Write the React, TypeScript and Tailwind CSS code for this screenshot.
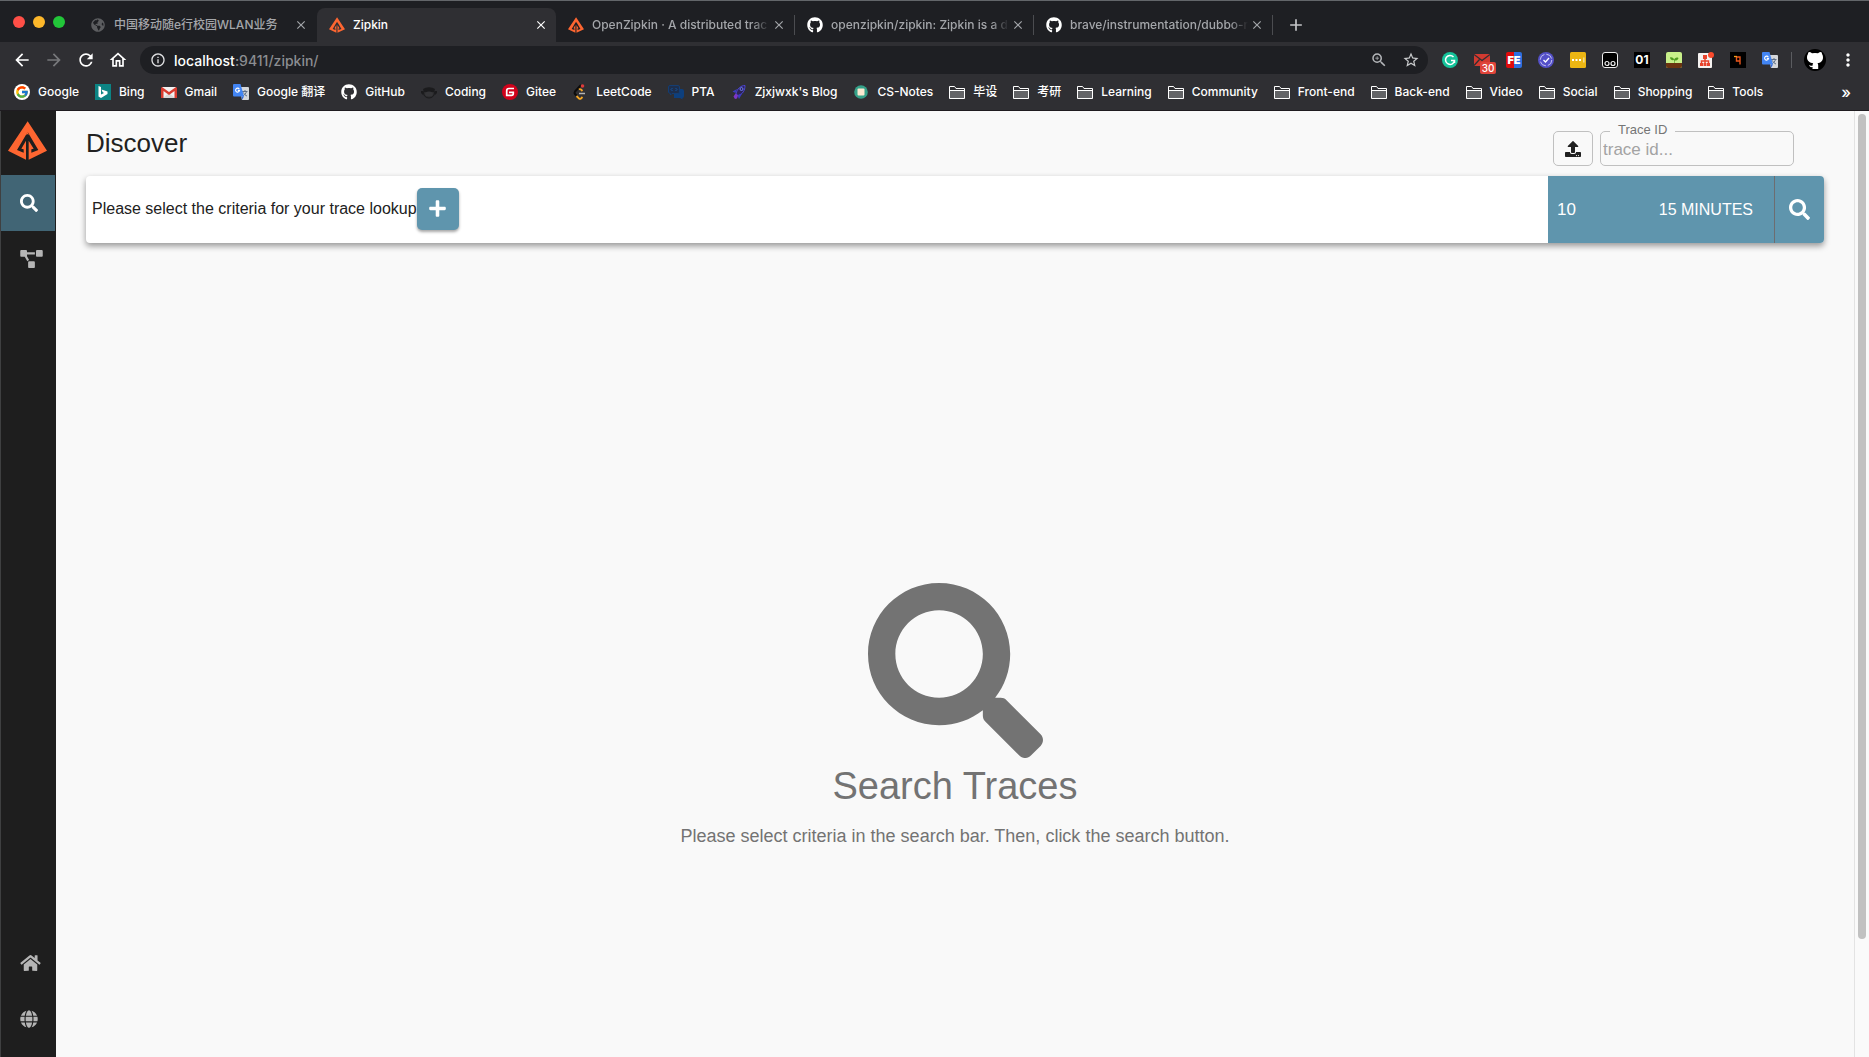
import React from 'react';
import { FaSearch, FaProjectDiagram, FaHome, FaGlobe, FaUpload, FaPlus, FaGithub, FaGlobeAmericas } from 'react-icons/fa';
import { MdArrowBack, MdArrowForward, MdRefresh, MdOutlineHome, MdInfoOutline, MdZoomIn, MdStarBorder, MdMoreVert, MdClose, MdAdd } from 'react-icons/md';
import { FcGoogle } from 'react-icons/fc';

function ZipkinLogo({ className }: { className: string }) {
  return (
    <svg className={className} viewBox="0 0 117 115" aria-hidden="true">
      <path
        fill="#fe6631"
        fillRule="evenodd"
        d="M59 0 L117 88 L62 115 V42 L58 38 L54 42 V115 L0 88 Z M59 32 L27 86 L47 94 V84 L40 82 L54 58 V42 Z M59 32 L91 86 L70 94 V84 L77 82 L62 58 V42 Z"
      />
    </svg>
  );
}

function TranslateIcon() {
  return (
    <svg className="size-4" viewBox="0 0 16 16" aria-hidden="true">
      <path fill="#d5d7da" d="M6 3h9a1 1 0 0 1 1 1v11a1 1 0 0 1-1 1H9z" />
      <path stroke="#5f6f86" fill="none" d="M9 7.500h5.500M12 6v1.500M13.500 7.500c-.5 2-2 3.500-3.500 4.500M10.500 8.500c.5 1.500 2 3 3.500 3.500" />
      <path fill="#4285f4" d="M1 0h6.500L11 12.500H1a1 1 0 0 1-1-1V1a1 1 0 0 1 1-1z" />
      <path fill="#3367d6" d="M8.500 12.500H11L9 16z" />
      <path stroke="#fff" fill="none" strokeWidth="1.100" d="M6.300 5a2 2 0 1 0 .3 1.400H4.800" />
    </svg>
  );
}

function FolderIcon() {
  return (
    <svg className="size-4" viewBox="0 0 16 16" aria-hidden="true">
      <path fill="#636467" stroke="#fff" d="M.5 14.500V2.500h5l1.500 2h8.500v10z" />
      <path fill="none" stroke="#fff" d="M.5 6.500h15" />
      <path fill="#2f2f33" d="M1 3h4.200l1.500 2H15v1H1z" />
    </svg>
  );
}

function BingIcon() {
  return (
    <svg className="size-4" viewBox="0 0 16 16" aria-hidden="true">
      <path fill="#0c8484" d="M0 0h16v16H0z" />
      <path fill="#fff" d="M3.500 2 6 3v7.500l3-1.500-1.500-1-1-2.500 6 2v2.500L6 14l-2.500-1.500z" />
    </svg>
  );
}

function GmailIcon() {
  return (
    <svg className="size-4" viewBox="0 0 16 16" aria-hidden="true">
      <path fill="#f2f2f2" d="M1 3h14v11H1z" />
      <path fill="#d8d8d8" d="M8 9l6 5H2z" />
      <path fill="#d93c30" d="M1 3l7 5 7-5 1 1v10h-2.500V7L8 11 2.500 7v7H0V4z" />
    </svg>
  );
}

function CodingIcon() {
  return (
    <svg className="size-4" viewBox="0 0 16 16" aria-hidden="true">
      <ellipse cx="8" cy="9" rx="5.500" ry="5" fill="#2b2b2d" stroke="#1b1b1d" />
      <path fill="#1b1b1d" d="M2 5a7 3 0 0 1 12 0l-1 3H3zM0 7h2v4L0 9zM16 7h-2v4l2-2z" />
      <ellipse cx="8" cy="10" rx="4" ry="2.500" fill="#343437" />
    </svg>
  );
}

function GiteeIcon() {
  return (
    <svg className="size-4" viewBox="0 0 16 16" aria-hidden="true">
      <circle cx="8" cy="8" r="8" fill="#d0021b" />
      <path fill="none" stroke="#fff" strokeWidth="1.700" d="M12 4.500H7A2.300 2.300 0 0 0 4.700 6.800v4.500H9.500a1.800 1.800 0 0 0 1.800-1.800V8.300H7" />
    </svg>
  );
}

function LeetCodeIcon() {
  return (
    <svg className="size-4" viewBox="0 0 16 16" aria-hidden="true">
      <path fill="none" stroke="#0c0c0c" strokeWidth="2" d="M9 1 3 7.500a2 2 0 0 0 0 2.500l2 2" />
      <path fill="none" stroke="#f5a623" strokeWidth="1.800" d="m4.500 12 2.500 2.500q1 .8 2 0l1.500-1.500M7 5.500q1-.8 2 0l1.500 1.500" />
      <path stroke="#b3b3b3" strokeWidth="1.500" d="M7 9.500h6" />
      <circle cx="10.500" cy="2" r="1.800" fill="#dd3b3b" />
    </svg>
  );
}

function PtaIcon() {
  return (
    <svg className="size-4" viewBox="0 0 16 16" aria-hidden="true">
      <path fill="#0d3f7d" d="M6 5h8a2 2 0 0 1 2 2v5a2 2 0 0 1-1.500 2v1.500L12 14H6z" />
      <path fill="#1d2e4c" stroke="#143d72" d="M2 1.500h8a1.500 1.500 0 0 1 1.500 1.500v5A1.500 1.500 0 0 1 10 9.500H4L2.500 11V9.500A2 2 0 0 1 .5 8V3A1.500 1.500 0 0 1 2 1.500z" />
      <path fill="none" stroke="#14549e" d="M4.500 4 3 5.500 4.500 7M7.500 4 9 5.500 7.500 7" />
    </svg>
  );
}

function RocketIcon() {
  return (
    <svg className="size-4" viewBox="0 0 16 16" aria-hidden="true">
      <path fill="#2d2456" stroke="#4c45d6" d="M14 1.500C10 1.500 6 4.500 5 10l2 1.500c5-1.500 7-5 7-10z" />
      <path fill="#3b3bbf" d="M6 5 1.500 7.500 4.500 9zM11.500 9 8 15l-1.500-3.500z" />
      <path fill="#7d35c9" d="m4.500 9.500 2.500 2-1 3-2 .5-1.500-2.500z" />
      <circle cx="10.500" cy="5" r="1.500" fill="none" stroke="#6d7ff0" />
    </svg>
  );
}

function NotesIcon() {
  return (
    <svg className="size-4" viewBox="0 0 16 16" aria-hidden="true">
      <circle cx="8" cy="8" r="6.800" fill="#35a189" />
      <rect x="4.500" y="4.500" width="7" height="7" rx="1" fill="#fbe9d0" />
    </svg>
  );
}

function Favicon({ name }: { name: string }) {
  switch (name) {
    case 'google':
      return (
        <span className="flex size-4 items-center justify-center rounded-full bg-white">
          <FcGoogle className="size-3.5" />
        </span>
      );
    case 'bing':
      return <BingIcon />;
    case 'gmail':
      return <GmailIcon />;
    case 'translate':
      return <TranslateIcon />;
    case 'github':
      return <FaGithub className="size-4 text-white" />;
    case 'coding':
      return <CodingIcon />;
    case 'gitee':
      return <GiteeIcon />;
    case 'leetcode':
      return <LeetCodeIcon />;
    case 'pta':
      return <PtaIcon />;
    case 'rocket':
      return <RocketIcon />;
    case 'notes':
      return <NotesIcon />;
    case 'zipkin':
      return <ZipkinLogo className="size-4" />;
    case 'globe':
      return <FaGlobeAmericas className="size-3.5 text-[#5c5d60]" />;
    default:
      return <FolderIcon />;
  }
}

const tabs = [
  { title: '中国移动随e行校园WLAN业务', icon: 'globe', active: false, divider: false },
  { title: 'Zipkin', icon: 'zipkin', active: true, divider: false },
  { title: 'OpenZipkin · A distributed trac', icon: 'zipkin', active: false, divider: true },
  { title: 'openzipkin/zipkin: Zipkin is a d', icon: 'github', active: false, divider: true },
  { title: 'brave/instrumentation/dubbo-r', icon: 'github', active: false, divider: true },
];

const bookmarks = [
  ['Google', 'google'],
  ['Bing', 'bing'],
  ['Gmail', 'gmail'],
  ['Google 翻译', 'translate'],
  ['GitHub', 'github'],
  ['Coding', 'coding'],
  ['Gitee', 'gitee'],
  ['LeetCode', 'leetcode'],
  ['PTA', 'pta'],
  ["Zjxjwxk's Blog", 'rocket'],
  ['CS-Notes', 'notes'],
  ['毕设', 'folder'],
  ['考研', 'folder'],
  ['Learning', 'folder'],
  ['Community', 'folder'],
  ['Front-end', 'folder'],
  ['Back-end', 'folder'],
  ['Video', 'folder'],
  ['Social', 'folder'],
  ['Shopping', 'folder'],
  ['Tools', 'folder'],
];

function TabStrip() {
  return (
    <div className="flex h-[41px] items-end bg-[#1e1f23]">
      <div className="flex h-full w-[78px] shrink-0 items-center gap-2 pl-[13px]">
        <span className="size-3 rounded-full bg-[#ff4f47]" />
        <span className="size-3 rounded-full bg-[#fdb72a]" />
        <span className="size-3 rounded-full bg-[#22c639]" />
      </div>
      {tabs.map((tab) => (
        <div
          key={tab.title}
          className={
            tab.active
              ? 'flex h-[34px] w-[239px] items-center rounded-t-lg bg-[#2f2f33] pr-2 pl-3 text-white'
              : 'flex h-[34px] w-[239px] items-center pl-3 text-[#a4a6aa]'
          }
        >
          <span className="mr-2 flex size-4 shrink-0 items-center justify-center">
            <Favicon name={tab.icon} />
          </span>
          <span
            className={
              tab.divider
                ? 'min-w-0 flex-1 mask-r-from-90% whitespace-nowrap'
                : 'min-w-0 flex-1 whitespace-nowrap'
            }
          >
            {tab.title}
          </span>
          <button aria-label={`Close ${tab.title}`} className="ml-0.5 shrink-0">
            <MdClose className="size-3.5" />
          </button>
          {!tab.active && <span className={tab.divider ? 'ml-2 h-5 w-px bg-[#4b4c50]' : 'ml-2 w-px'} />}
        </div>
      ))}
      <button aria-label="New tab" className="flex h-[34px] items-center pl-[13px] text-[#c4c5c8]">
        <MdAdd className="size-5" />
      </button>
    </div>
  );
}

function Extensions() {
  return (
    <div className="flex items-center gap-4">
      <svg className="size-4" viewBox="0 0 16 16" aria-label="Grammarly">
        <circle cx="8" cy="8" r="8" fill="#15c39a" />
        <path fill="none" stroke="#fff" strokeWidth="1.500" d="M11.500 5A4.500 4.500 0 1 0 12.500 8.500H9M12.500 8.500v2.500" />
      </svg>
      <span className="relative size-4">
        <svg className="size-4" viewBox="0 0 16 16" aria-label="Mail checker">
          <path fill="#d23a30" d="M0 2h16v12H0z" />
          <path fill="none" stroke="#2f2f33" strokeWidth="1.300" d="m0 2.500 8 6 8-6M0 13.500l5.500-6" />
        </svg>
        <span className="absolute top-2.5 left-1.5 flex h-3 w-4 items-center justify-center rounded-xs bg-[#e0443a] text-[10px] text-white">30</span>
      </span>
      <span className="flex size-4 items-center justify-center rounded-xs bg-linear-to-r from-[#e00b0b] from-50% to-[#2d6fe0] to-50% text-[11px] font-black text-white">FE</span>
      <svg className="size-4" viewBox="0 0 16 16" aria-label="Todo">
        <circle cx="8" cy="8" r="8" fill="#5450c8" />
        <circle cx="8" cy="8" r="5.800" fill="none" stroke="#c5c3f2" strokeDasharray="7 2" />
        <path fill="none" stroke="#fff" strokeWidth="1.300" d="m5.500 8 2 2 3.500-4" />
      </svg>
      <svg className="size-4" viewBox="0 0 16 16" aria-label="Passwords">
        <rect width="16" height="16" rx="1.500" fill="#ecb613" />
        <path fill="#fff" d="M2 7h2v2H2zM5.500 7h2v2h-2zM9 7h2v2H9zM13.500 5.500h.8v5h-.8z" />
      </svg>
      <svg className="size-4" viewBox="0 0 16 16" aria-label="Scripts">
        <rect x=".5" y=".5" width="15" height="15" rx="2.500" fill="#000" stroke="#eee" />
        <circle cx="5" cy="11.500" r="2" fill="none" stroke="#eee" strokeWidth="1.200" />
        <circle cx="11" cy="11.500" r="2" fill="none" stroke="#eee" strokeWidth="1.200" />
      </svg>
      <span className="flex size-4 items-center justify-center bg-black text-[12px] font-bold text-white">01</span>
      <svg className="size-4" viewBox="0 0 16 16" aria-label="Plant">
        <rect width="16" height="16" rx="2" fill="#c8f08a" />
        <path fill="#6b3410" d="M0 11h16v3a2 2 0 0 1-2 2H2a2 2 0 0 1-2-2z" />
        <path fill="#4f9b20" d="M8 11V8C6 8.500 4 7.500 4 5.500 6 5 8 6 8 8c.5-2 2.500-3 4.500-2C12 8 10 8.800 8.600 8.500V11z" />
      </svg>
      <svg className="size-4" viewBox="0 0 16 16" aria-label="Sitemap">
        <rect y="1" width="14" height="15" rx="1" fill="#f5f2f1" />
        <path fill="none" stroke="#e8432c" strokeWidth="1.500" d="M7 5v6M3.500 12V9h7v3" />
        <path fill="#e8432c" d="M5 3h4v4H5zM2 11h3v3H2zM5.500 11h3v3h-3zM9 11h3v3H9z" />
        <circle cx="13" cy="3" r="3" fill="#fb4a2c" />
      </svg>
      <svg className="size-4" viewBox="0 0 16 16" aria-label="Query">
        <path fill="#000" d="M0 0h16v16H0z" />
        <path fill="none" stroke="#e8561c" strokeWidth="1.400" d="M10 12.500V5H6.500v4H10" />
        <path fill="none" stroke="#f0a01c" strokeWidth="1.300" d="M4 4.500h3" />
      </svg>
      <TranslateIcon />
    </div>
  );
}

function Toolbar() {
  return (
    <div className="flex h-9 items-center bg-[#2f2f33] pr-[11px] pl-3">
      <div className="flex items-center gap-3 text-white">
        <button aria-label="Back"><MdArrowBack className="size-5" /></button>
        <button aria-label="Forward" className="text-[#77787b]"><MdArrowForward className="size-5" /></button>
        <button aria-label="Reload"><MdRefresh className="size-5" /></button>
        <button aria-label="Home"><MdOutlineHome className="size-5" /></button>
      </div>
      <div className="ml-3 flex h-7 flex-1 items-center rounded-full bg-[#1e1f23] pr-2 pl-2.5">
        <MdInfoOutline className="size-4 text-[#e0e1e3]" />
        <span className="ml-2 flex-1 text-[14px] text-[#8b8d91]">
          <span className="text-white">localhost</span>:9411/zipkin/
        </span>
        <button aria-label="Zoom" className="text-[#b5b7ba]"><MdZoomIn className="size-[18px]" /></button>
        <button aria-label="Bookmark" className="ml-3.5 text-[#c9cbcd]"><MdStarBorder className="size-[18px]" /></button>
      </div>
      <div className="ml-3.5">
        <Extensions />
      </div>
      <span className="ml-[13px] h-4 w-px bg-[#5b5c60]" />
      <span className="ml-3 flex size-[22px] items-center justify-center rounded-full bg-black">
        <svg className="size-[18px]" viewBox="0 0 18 18" aria-label="Profile">
          <path fill="#fff" d="M2 3c0-1 .5-2 1-2 1 0 2 .5 3 1.300a12 12 0 0 1 6 0C13 1.500 14 1 15 1c.5 0 1 1 1 2 .7 1 1 2 1 3.500C17 10 14.500 12 11.500 12.200c.5.500.7 1.200.7 2V18H6.500v-2C4.500 16.500 3.500 15.500 3 14c.8 0 1.500 1 3.500.8 0-1 .2-2 .7-2.600C4 12 1 10 1 6.500 1 5 1.300 4 2 3z" />
        </svg>
      </span>
      <button aria-label="Menu" className="ml-3 text-white"><MdMoreVert className="size-5" /></button>
    </div>
  );
}

function BookmarksBar() {
  return (
    <nav className="flex h-[33px] items-center border-b border-[#1f1c20] bg-[#2f2f33] pb-1 pl-3.5 text-white">
      <div className="flex min-w-0 flex-1 items-center gap-4 overflow-hidden">
        {bookmarks.map(([label, icon]) => (
          <a key={label} href="#" className="flex shrink-0 items-center gap-2">
            <Favicon name={icon} />
            {label}
          </a>
        ))}
      </div>
      <button aria-label="More bookmarks" className="px-[18px] text-[16px]">»</button>
    </nav>
  );
}

function Sidebar() {
  return (
    <aside className="flex w-14 shrink-0 flex-col border-l border-[#3f4041] bg-[#1e1e1e] text-[#b5b5b5]">
      <div className="flex h-16 justify-center pt-2.5 pr-[3px]">
        <ZipkinLogo className="size-[39px]" />
      </div>
      <a href="#" aria-label="Discover" className="mr-px flex h-14 items-center bg-[#416575] pl-[19px] text-white">
        <FaSearch className="size-[18px]" />
      </a>
      <a href="#" aria-label="Dependencies" className="flex h-14 items-center pl-[19px]">
        <FaProjectDiagram className="h-[18px] w-[23px]" />
      </a>
      <a href="#" aria-label="Home page" className="mt-auto flex h-14 items-center pl-[19px]">
        <FaHome className="h-[18px] w-[21px]" />
      </a>
      <a href="#" aria-label="Language" className="mb-2.5 flex h-14 items-center pl-[19px]">
        <FaGlobe className="size-[18px]" />
      </a>
    </aside>
  );
}

function SearchBar() {
  return (
    <div className="flex h-[67px] items-stretch rounded-sm bg-white shadow-[0_3px_6px_rgba(0,0,0,0.4)]">
      <div className="flex flex-1 items-center pb-0.5 pl-1.5 text-[16px]">
        <span>Please select the criteria for your trace lookup</span>
        <button aria-label="Add criterion" className="flex size-[42px] items-center justify-center rounded-[5px] bg-[#5f95ad] text-white shadow-[0_2px_3px_rgba(0,0,0,0.35)]">
          <FaPlus className="size-[19px]" />
        </button>
      </div>
      <div className="flex items-center rounded-r-sm bg-[#5f95ad] text-white">
        <input aria-label="Limit" defaultValue="10" className="w-[90px] bg-transparent pl-[9px] text-[17px] outline-none" />
        <button className="h-full w-[136px] pr-[21px] text-right text-[16px]">15 MINUTES</button>
        <button aria-label="Search" className="flex h-full w-[50px] items-center justify-center border-l border-[#6d6d70]">
          <FaSearch className="size-[21px]" />
        </button>
      </div>
    </div>
  );
}

function Discover() {
  return (
    <main className="flex flex-1 flex-col bg-[#f9f9f9] px-[30px] text-[#212121]">
      <header className="flex h-[65px] items-start justify-between pr-[30px]">
        <h1 className="pt-4 text-[26px] leading-8">Discover</h1>
        <div className="flex gap-[7px] pt-5">
          <button aria-label="Upload" className="flex h-[35px] w-10 items-center justify-center rounded-[5px] border border-[#c0c0c0]">
            <FaUpload className="size-4" />
          </button>
          <div className="relative">
            <label htmlFor="trace-id" className="absolute -top-[9px] left-2.5 bg-[#f9f9f9] px-2 text-[13px] leading-4 text-[#757575]">
              Trace ID
            </label>
            <input id="trace-id" placeholder="trace id..." className="h-[35px] w-[194px] rounded-[5px] border border-[#c0c0c0] bg-transparent pt-0.5 pl-0.5 text-[17px] outline-none placeholder:text-[#a3a3a3]" />
          </div>
        </div>
      </header>
      <SearchBar />
      <section className="flex flex-1 flex-col items-center justify-center pt-33 text-[#737373]">
        <FaSearch className="size-[175px]" />
        <h2 className="mt-1.5 text-[38px] leading-[44px]">Search Traces</h2>
        <p className="mt-3.5 text-[18px] leading-7">Please select criteria in the search bar. Then, click the search button.</p>
      </section>
    </main>
  );
}

export default function App() {
  return (
    <div className="flex h-screen flex-col overflow-hidden border-t border-[#63666a] bg-[#1e1f23]">
      <div className="font-[Inter,'Noto_Sans_CJK_SC',sans-serif] text-[12px] font-medium">
        <TabStrip />
        <Toolbar />
        <BookmarksBar />
      </div>
      <div className="flex min-h-0 flex-1 font-['Liberation_Sans',Arial,sans-serif]">
        <Sidebar />
        <Discover />
        <div className="w-[15px] border-l border-[#e3e3e3] bg-[#fafafa] pt-[3px] pl-[3px]">
          <div className="h-[87.5%] w-2 rounded-full bg-[#c1c1c1]" />
        </div>
      </div>
    </div>
  );
}
